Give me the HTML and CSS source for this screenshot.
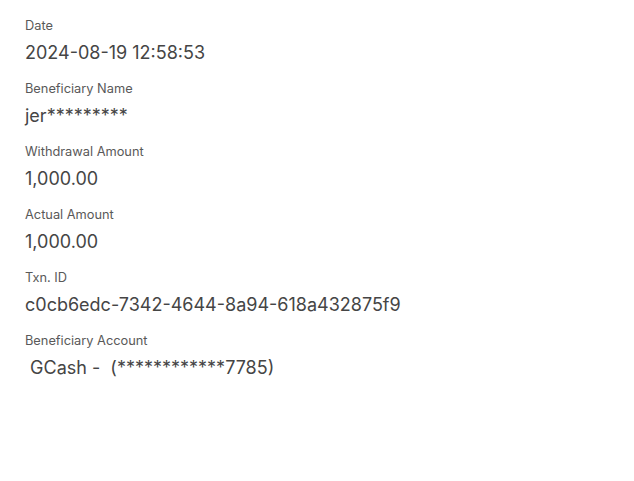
FILE: index.html
```html
<!DOCTYPE html>
<html lang="en">
  <head>
    <meta charset="UTF-8" />
    <meta name="viewport" content="width=device-width, initial-scale=1.0" />
    <title>Withdrawal details</title>
    <link rel="stylesheet" href="styles.css">
  </head>
  <body>
    <section class="details">
      <div class="item">
        <p class="label">Date</p>
        <p class="value">2024-08-19 12:58:53</p>
      </div>
      <div class="item">
        <p class="label">Beneficiary Name</p>
        <p class="value">jer*********</p>
      </div>
      <div class="item">
        <p class="label">Withdrawal Amount</p>
        <p class="value">1,000.00</p>
      </div>
      <div class="item">
        <p class="label">Actual Amount</p>
        <p class="value">1,000.00</p>
      </div>
      <div class="item">
        <p class="label">Txn. ID</p>
        <p class="value">c0cb6edc-7342-4644-8a94-618a432875f9</p>
      </div>
      <div class="item">
        <p class="label">Beneficiary Account</p>
        <p class="value account"> GCash -  (************7785)</p>
      </div>
    </section>
  </body>
</html>
```

FILE: styles.css
```css
* {
  margin: 0;
  padding: 0;
  box-sizing: border-box;
  font-family: Inter, "Noto Sans", sans-serif;
}

body {
  background-color: #ffffff;
}

.details {
  padding: 16px 25px 0;
  display: flex;
  flex-direction: column;
  gap: 10px;
}

.item {
  display: flex;
  flex-direction: column;
}

.label {
  font-size: 12.8px;
  line-height: 20px;
  color: #595959;
}

.value {
  padding-top: 1px;
  font-size: 18px;
  line-height: 32px;
  color: #454545;
}

.account {
  white-space: pre;
}
```
